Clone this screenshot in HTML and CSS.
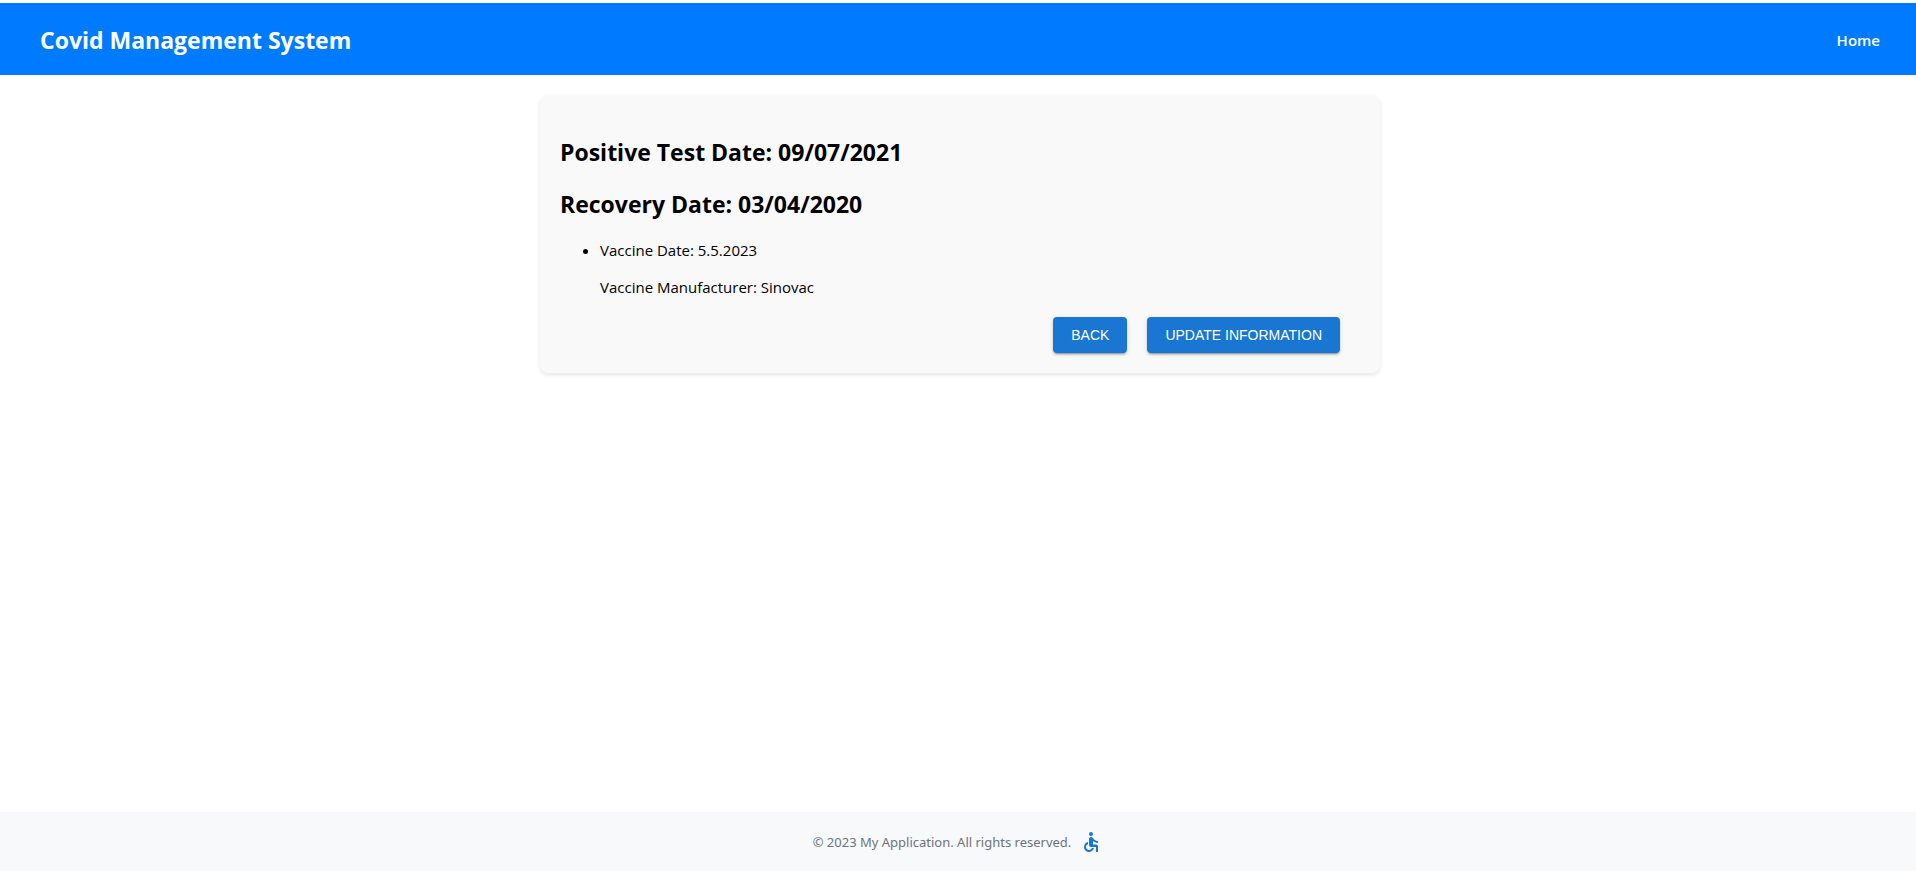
FILE: index.html
```html
<!DOCTYPE html>
<html lang="en">
<head>
  <meta charset="utf-8">
  <meta name="viewport" content="width=device-width, initial-scale=1">
  <title>Covid Management System</title>
  <link rel="stylesheet" href="styles.css">
</head>
<body class="page">
  <header class="navbar">
    <h1 class="brand">Covid Management System</h1>
    <nav><a class="nav-link" href="#">Home</a></nav>
  </header>
  <main class="content">
    <section class="card">
      <h2 class="card-heading">Positive Test Date: 09/07/2021</h2>
      <h2 class="card-heading">Recovery Date: 03/04/2020</h2>
      <ul class="vaccines">
        <li>
          <p class="detail">Vaccine Date: 5.5.2023</p>
          <p class="detail">Vaccine Manufacturer: Sinovac</p>
        </li>
      </ul>
      <div class="actions">
        <button class="button" type="button">BACK</button>
        <button class="button" type="button">UPDATE INFORMATION</button>
      </div>
    </section>
  </main>
  <footer class="footer">
    <span>© 2023 My Application. All rights reserved.</span>
    <svg class="footer-icon" viewBox="0 0 24 24" role="img" aria-label="Accessibility">
      <circle cx="12" cy="4" r="2"/>
      <path d="M19 13v-2c-1.54.02-3.09-.75-4.07-1.83l-1.29-1.43c-.17-.19-.38-.34-.61-.45-.01 0-.01-.01-.02-.01H13c-.35-.2-.75-.3-1.19-.26C10.76 7.11 10 8.04 10 9.09V15c0 1.1.9 2 2 2h5v5h2v-5.5c0-1.1-.9-2-2-2h-3v-3.45c1.29 1.07 3.25 1.94 5 1.95zm-6.17 5c-.41 1.16-1.52 2-2.83 2-1.66 0-3-1.34-3-3 0-1.31.84-2.41 2-2.83V12.1c-2.28.46-4 2.48-4 4.9 0 2.76 2.24 5 5 5 2.42 0 4.44-1.72 4.9-4h-2.07z"/>
    </svg>
  </footer>
</body>
</html>
```
FILE: styles.css
```css
* {
  box-sizing: border-box;
}

.page {
  display: flex;
  flex-direction: column;
  min-height: 100vh;
  margin: 0;
  padding-top: 3px;
  background: #fff;
  color: #000;
  font-family: "Open Sans", "Noto Sans", sans-serif;
  font-size: 15px;
}

.navbar {
  display: flex;
  align-items: center;
  justify-content: space-between;
  padding: 21px 36px 19px 40px;
  background: #007bff;
  color: #fff;
}

.brand {
  margin: 0;
  font-size: 23px;
  font-weight: 700;
  line-height: 32px;
}

.nav-link {
  color: #fff;
  font-weight: 600;
  text-decoration: none;
}

.content {
  flex: 1;
  padding: 20px 20px 20px 24px;
}

.card {
  max-width: 840px;
  margin: 0 auto;
  padding: 41px 20px 20px;
  border-radius: 8px;
  background: #f9f9f9;
  box-shadow: 0 2px 4px rgba(0, 0, 0, 0.1);
}

.card-heading {
  margin: 0 0 20px;
  font-size: 23px;
  font-weight: 700;
  line-height: 32px;
}

.vaccines {
  margin: 0 0 19px;
  padding-left: 40px;
}

.detail {
  margin: 0 0 16px;
  line-height: 21px;
}

.detail:last-child {
  margin-bottom: 0;
}

.actions {
  display: flex;
  justify-content: flex-end;
  gap: 20px;
  padding-right: 20px;
}

.button {
  padding: 6px 18px;
  border: 0;
  border-radius: 4px;
  background: #1976d2;
  color: #fff;
  font-family: "Liberation Sans", Arial, sans-serif;
  font-size: 14px;
  line-height: 24px;
  box-shadow: 0 3px 1px -2px rgba(0, 0, 0, 0.2), 0 2px 2px 0 rgba(0, 0, 0, 0.14), 0 1px 5px 0 rgba(0, 0, 0, 0.12);
  cursor: pointer;
}

.footer {
  display: flex;
  align-items: center;
  justify-content: center;
  gap: 8px;
  padding: 18px 20px 17px;
  background: #f8f9fa;
  color: #6c757d;
  font-family: "Noto Sans", "Open Sans", sans-serif;
  font-size: 13px;
  line-height: 24px;
}

.footer-icon {
  width: 24px;
  height: 24px;
  fill: #1976d2;
}
```
